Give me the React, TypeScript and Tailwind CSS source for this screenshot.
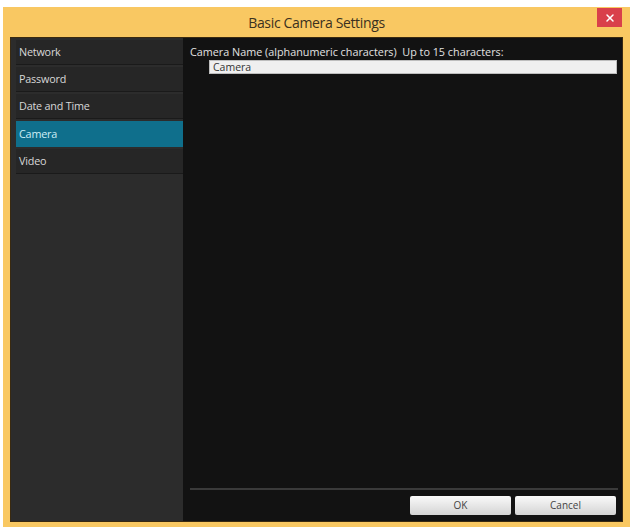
import { X } from "lucide-react";

const items = ["Network", "Password", "Date and Time", "Camera", "Video"];

export default function App() {
  const selected = "Camera";
  return (
    <div className="w-[634px] h-[529px] bg-white pt-[7px] pl-[3px] pr-[4px] pb-[2px] font-['Open_Sans',sans-serif]">
      <div className="h-full bg-[#f9c862] flex flex-col px-[7px] pb-[5px]">
        {/* title bar */}
        <div className="relative h-[30px] flex items-center justify-center">
          <span className="text-[14px] text-[#3b3120] tracking-tight">Basic Camera Settings</span>
          <button className="absolute right-[1px] top-[1px] w-[25px] h-[19px] bg-[#d9404a] flex items-center justify-center">
            <X className="w-3 h-3 text-white" strokeWidth={3} />
          </button>
        </div>

        <div className="flex-1 flex bg-[#121212] border border-[#3a2a10]">
          {/* sidebar */}
          <div className="w-[172px] bg-[#2c2c2c] pl-[5px] pt-[2px] flex flex-col gap-[2px]">
            {items.map((it) => (
              <div
                key={it}
                className={
                  it === selected
                    ? "h-[26px] flex items-center px-[3px] text-[10.8px] tracking-[-0.2px] text-[#cdeef7] bg-[#0f6f8c]"
                    : "h-[25px] flex items-center px-[3px] text-[10.8px] tracking-[-0.2px] text-[#d8d8d8] bg-[#262626] border-b border-[#1a1a1a]"
                }
              >
                {it}
              </div>
            ))}
          </div>

          {/* content */}
          <div className="flex-1 flex flex-col pl-[7px] pr-[4px] pt-[7px] pb-[6px]">
            <div className="text-[10.8px] text-[#e2e2e2] leading-[14px]">
              Camera Name (alphanumeric characters)&nbsp;&nbsp;Up to 15 characters:
            </div>
            <div className="ml-[19px] mr-[1px] mt-[1px] h-[14px] bg-[#efefef] border border-[#bdbdbd] text-[10.5px] leading-[12px] text-[#333] px-[3px]">
              Camera
            </div>
            <div className="flex-1" />
            <div className="h-[2px] bg-[#3a3a3a] mb-[6px]" />
            <div className="flex justify-end gap-[4px] pr-[2px]">
              <button className="w-[101px] h-[19px] bg-gradient-to-b from-[#fafafa] to-[#d4d4d4] rounded-[2px] text-[10px] text-[#444]">
                OK
              </button>
              <button className="w-[101px] h-[19px] bg-gradient-to-b from-[#fafafa] to-[#d4d4d4] rounded-[2px] text-[10px] text-[#444]">
                Cancel
              </button>
            </div>
          </div>
        </div>
      </div>
    </div>
  );
}
